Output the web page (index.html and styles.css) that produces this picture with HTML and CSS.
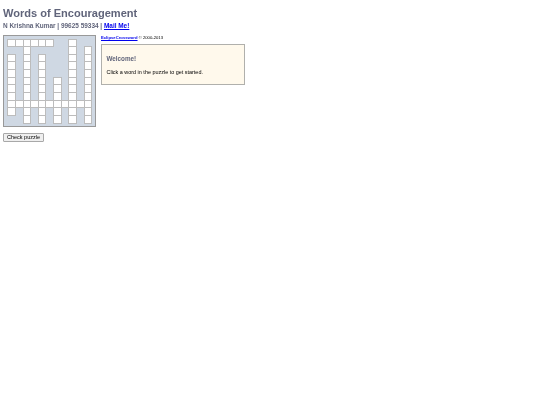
FILE: index.html
```html
<!DOCTYPE html>
<html lang="en">
<head>
<meta charset="utf-8">
<title>Words of Encouragement</title>
<link rel="stylesheet" href="styles.css">
</head>
<body>
<div class="page">
<h1 class="title">Words of Encouragement</h1>
<h2 class="subtitle">N Krishna Kumar | 99625 59334 | <a href="#">Mail Me!</a></h2>
<div class="main">
  <div class="left">
    <div class="board" id="board"></div>
    <button class="check" type="button">Check puzzle</button>
  </div>
  <div class="right">
    <p class="credit"><a href="#">EclipseCrossword</a> © 2000-2013</p>
    <div class="welcome">
      <h3>Welcome!</h3>
      <p>Click a word in the puzzle to get started.</p>
    </div>
  </div>
</div>
</div>
<script src="board.js"></script>
</body>
</html>
```
FILE: styles.css
```css
html, body { margin: 0; padding: 0; background: #fff; }
body { font-family: "Liberation Sans", Arial, sans-serif; color: #000; }
.page { padding: 7px 3px 0; filter: blur(0.2px); }
.title { margin: 0; font-size: 11.05px; line-height: 13px; font-weight: bold; color: #60647a; }
.subtitle { margin: 0.5px 0 0; font-size: 6.45px; line-height: 9px; font-weight: bold; color: #60647a; }
.subtitle a { color: #0000ee; }
.main { display: flex; align-items: flex-start; gap: 5px; margin-top: 5.5px; }
.left { display: flex; flex-direction: column; align-items: flex-start; }
.board {
  box-sizing: border-box; width: 93px; height: 92px;
  padding: 2.5px 3.2px; border: 1px solid #999; background: #cfd8e3;
  display: grid; grid-template-columns: repeat(11, 7.66px); grid-template-rows: repeat(11, 7.66px);
}
.cell { background: #fff; border: 1px solid #bcbcbc; margin: 0 -1px -1px 0; }
.check {
  margin-top: 6px; width: 41px; height: 9px; padding: 0;
  font: 5.5px/7px "Liberation Sans", Arial, sans-serif; color: #000;
  background: #efefef; border: 1px solid #a8a8a8; border-radius: 1px;
}
.right { width: 144px; }
.credit { margin: 0; font-size: 4.2px; line-height: 5px; }
.credit a { color: #0000ee; font-weight: bold; }
.welcome {
  box-sizing: border-box; width: 144px; height: 41px; margin-top: 4px;
  padding: 0 4.5px; background: #fff9ec; border: 1px solid #b0b0ac;
}
.welcome h3 { margin: 10px 0 0; font-size: 6.3px; line-height: 8px; font-weight: bold; color: #60647a; }
.welcome p { margin: 6px 0 0; font-size: 5.45px; line-height: 6px; }
```
FILE: board.js
```js
var rows = [
  [0,1,2,3,4,5,8],
  [2,8,10],
  [0,2,4,8,10],
  [0,2,4,8,10],
  [0,2,4,8,10],
  [0,2,4,6,8,10],
  [0,2,4,6,8,10],
  [0,2,4,6,8,10],
  [0,1,2,3,4,5,6,7,8,9,10],
  [0,2,4,6,8,10],
  [2,4,6,8,10]
];
var board = document.getElementById('board');
rows.forEach(function (cols, r) {
  cols.forEach(function (c) {
    var d = document.createElement('div');
    d.className = 'cell';
    d.style.gridRow = r + 1;
    d.style.gridColumn = c + 1;
    board.appendChild(d);
  });
});
```
